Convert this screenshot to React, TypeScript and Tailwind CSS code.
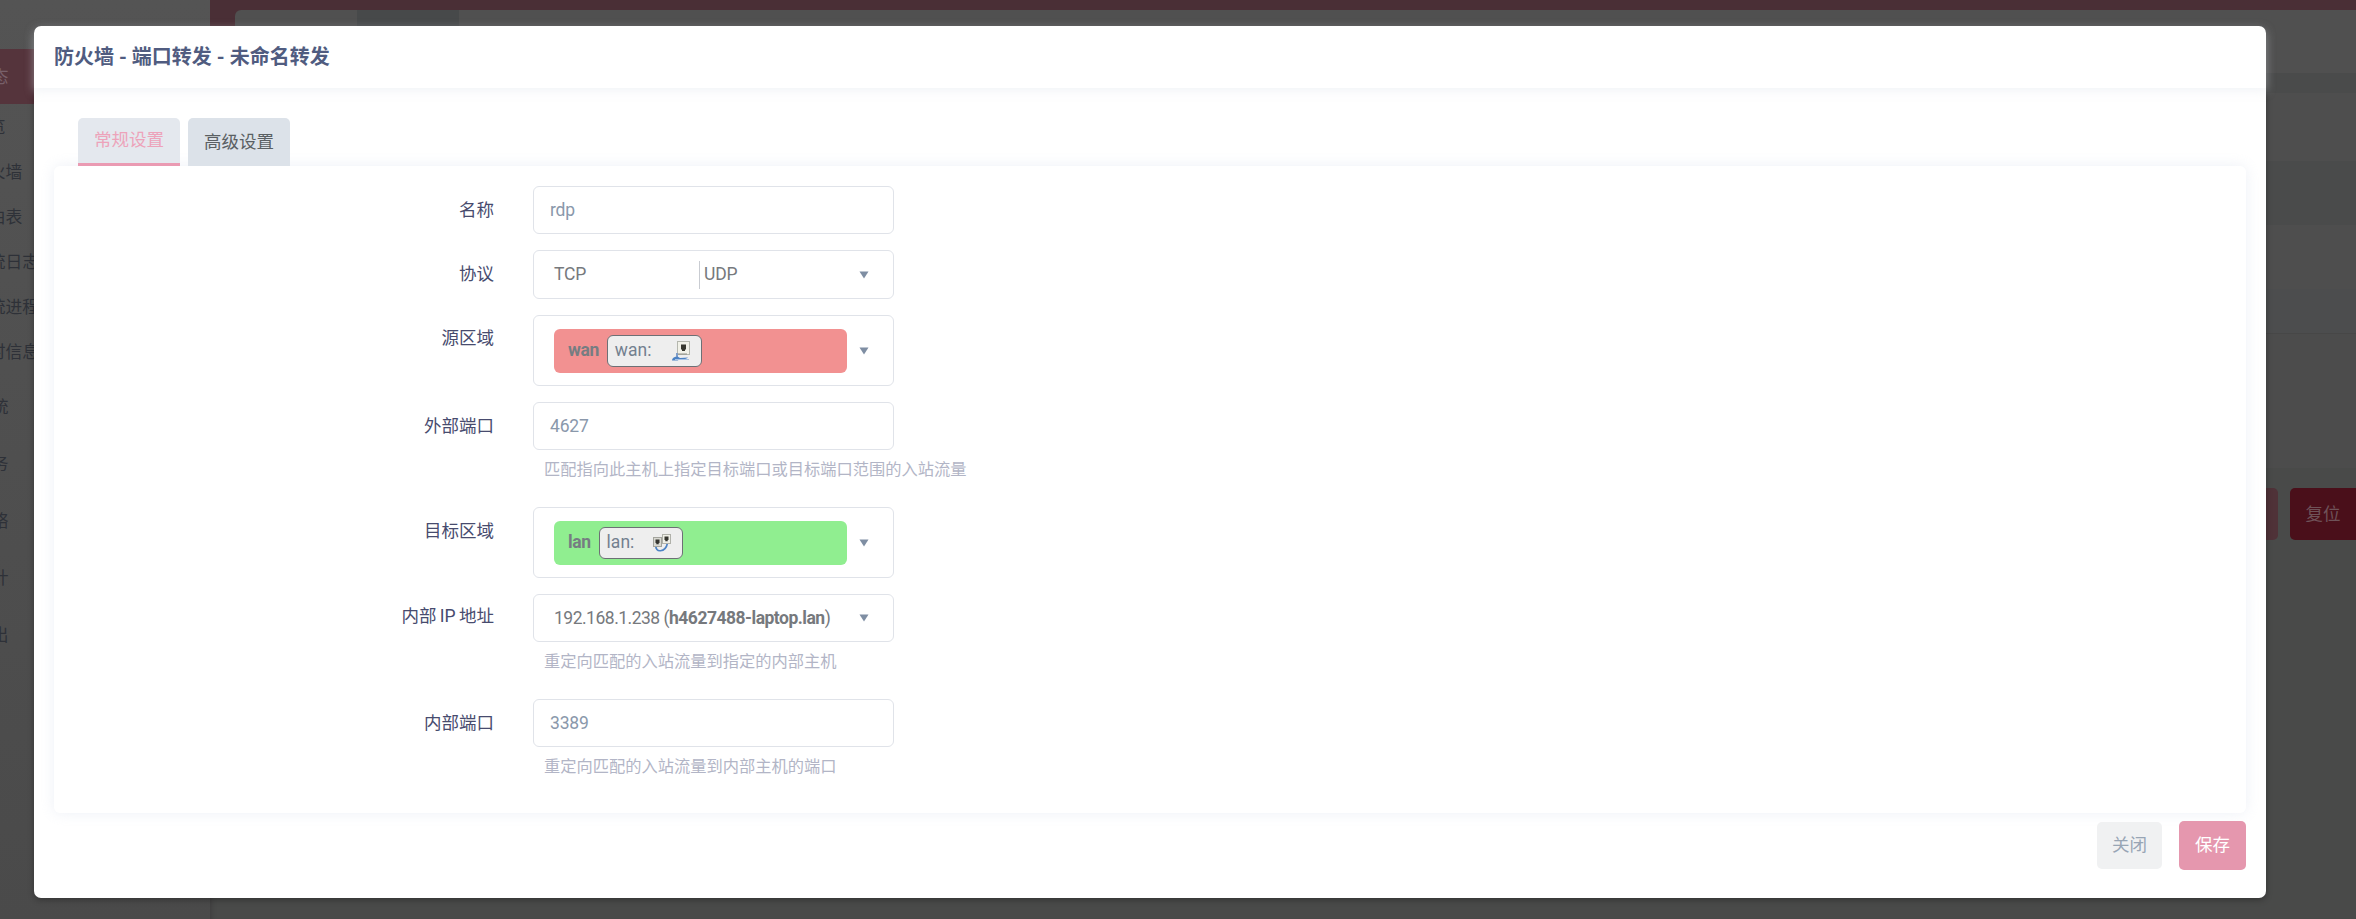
import React from "react";

const subItems = ["概览", "防火墙", "路由表", "系统日志", "系统进程", "实时信息"];
const topItems = ["系统", "服务", "网络", "统计", "退出"];

const Arrow = () => (
  <svg width="10" height="8" viewBox="0 0 10 8" className="shrink-0">
    <path d="M0.5 0.5h9L5 7.5z" fill="#7f8ea3" />
  </svg>
);

const WanIcon = () => (
  <svg width="20" height="22" viewBox="0 0 20 22" className="shrink-0">
    <rect x="6.5" y="1.5" width="12" height="13" fill="#f1f1e8" stroke="#b5b7ae" />
    <path d="M10 4.500h5v5h-1v1.500h-3V9.500h-1z" fill="#37372f" />
    <path d="M7 14h9" stroke="#8f9188" strokeWidth="1" />
    <path d="M6 13v4" stroke="#7f9dc8" strokeWidth="2" />
    <path d="M1 20.500c.5-3.500 3-3.500 5.500-4l2.500 1.500 8-.5c-2 2.500-8 1.500-10.500 3z" fill="#4c82c4" />
    <path d="M4 19.500h14" stroke="#a7c2e4" strokeWidth="1" />
  </svg>
);

const LanIcon = () => (
  <svg width="20" height="20" viewBox="0 0 20 20" className="shrink-0">
    <path d="M4 12c-1.500 8 9.500 8 11.500-2" fill="none" stroke="#4c82c4" strokeWidth="1.700" />
    <rect x="1.500" y="4.500" width="8" height="9" fill="#d9d9d2" stroke="#a3a49d" />
    <rect x="10.500" y="1.500" width="8" height="9" fill="#efefe7" stroke="#b0b1aa" />
    <path d="M3.500 6.500h4v3.500h-.8v1.200H4.300V10h-.8z" fill="#35352f" />
    <path d="M12.500 3.500h4V7h-.8v1.200h-2.400V7h-.8z" fill="#35352f" />
  </svg>
);

const Row = ({
  label,
  hint,
  labelTop = "",
  children,
}: {
  label: string;
  hint?: string;
  labelTop?: string;
  children: React.ReactNode;
}) => (
  <div className="flex mb-[16px]">
    <label className={`w-[440px] shrink-0 text-right text-[17.5px] leading-[24px] text-[#474b6e] ${labelTop}`}>
      {label}
    </label>
    <div className="ml-[39px] w-[361px]">
      {children}
      {hint && (
        <div className="h-[41px] pl-[11px] pt-[9px] text-[16.25px] leading-[22px] whitespace-nowrap text-[#b2b5c6]">
          {hint}
        </div>
      )}
    </div>
  </div>
);

const TextBox = ({ value }: { value: string }) => (
  <div className="h-[48px] flex items-center px-[16px] rounded-[6px] border border-[#e0e3e9] text-[17.5px] tracking-[-0.2px] text-[#8a98ab]">
    {value}
  </div>
);

const Zone = ({
  name,
  bg,
  chipWidth,
  children,
}: {
  name: string;
  bg: string;
  chipWidth: string;
  children: React.ReactNode;
}) => (
  <div className="h-[71px] flex items-center pl-[20px] pr-[24px] rounded-[6px] border border-[#e0e3e9] justify-between">
    <div className={`w-[293px] h-[44px] rounded-[6px] flex items-center pl-[14px] ${bg}`}>
      <span className="text-[17.5px] font-bold tracking-[-0.4px] text-[#767d82]">{name}</span>
      <div className={`ml-[8px] h-[32px] flex items-center justify-between pl-[7px] pr-[10px] rounded-[6px] border border-[#6d7075] bg-[#eeeeee] text-[17.5px] text-[#73808f] ${chipWidth}`}>
        <span>{name}:</span>
        {children}
      </div>
    </div>
    <Arrow />
  </div>
);

export default function App() {
  return (
    <div className="relative h-[919px] w-full overflow-hidden bg-[#4a4a4a] font-['Roboto','Noto_Sans_CJK_SC',sans-serif]">
      {/* page behind the dialog */}
      <div className="flex h-full">
        <aside className="w-[210px] shrink-0 overflow-hidden bg-gradient-to-b from-[#545454] to-[#4a4a4a] text-[16.8px] leading-[24px] text-[#2e3138] whitespace-nowrap">
          <div className="h-[49px]" />
          <div className="h-[55px] flex items-center bg-[#55343c] text-[#78606a]">
            <span className="-ml-[25px]">状态</span>
          </div>
          {subItems.map((item) => (
            <div key={item} className="h-[45px] flex items-center first:mt-[7px]">
              <span className="-ml-[28px]">{item}</span>
            </div>
          ))}
          <div className="mt-[4px]">
            {topItems.map((item) => (
              <div key={item} className="h-[57px] flex items-center">
                <span className="-ml-[25px]">{item}</span>
              </div>
            ))}
          </div>
        </aside>
        <main className="flex-1 flex flex-col bg-[#494a49] shadow-[inset_6px_0_6px_-6px_rgba(0,0,0,0.25)]">
          <div className="bg-[#4a2f36] pt-[10px] pl-[25px]">
            <div className="h-[16px] flex bg-[#505050] rounded-tl-[6px]">
              <div className="w-[122px]" />
              <div className="w-[102px] bg-[#47494a]" />
            </div>
          </div>
          <div className="ml-[25px]">
            <div className="h-[47px] bg-[#505050]" />
            <div className="h-[20px] bg-[#4a4b4b]" />
            <div className="h-[68px] bg-[#4e4e4e]" />
            <div className="h-[64px] bg-[#4a4b4b]" />
            <div className="h-[64px] bg-[#4e4e4e]" />
            <div className="h-[45px] bg-[#4c4d4e] border-b border-[#474747]" />
            <div className="h-[134px] bg-[#4c4c4c]" />
          </div>
          <div className="mt-[20px] flex justify-end gap-[12px]">
            <div className="w-[100px] h-[52px] rounded-[5px] bg-[#4f3238]" />
            <div className="w-[66px] h-[52px] rounded-l-[5px] bg-[#4a0f1a] flex items-center justify-center text-[17.5px] text-[#6f5258]">
              复位
            </div>
          </div>
        </main>
      </div>

      {/* dialog */}
      <div className="absolute left-[34px] top-[26px] w-[2232px] h-[872px] flex flex-col rounded-[7px] bg-white shadow-[0_2px_6px_rgba(0,0,0,0.3)]">
        <div className="h-[62px] shrink-0 flex items-center px-[20px] rounded-t-[7px] shadow-[0_3px_10px_rgba(230,233,240,0.5)] text-[20px] font-bold text-[#505c80]">
          防火墙 - 端口转发 - 未命名转发
        </div>
        <div className="flex-1 px-[20px] pt-[30px]">
          <div className="flex ml-[24px] gap-[8px] text-[17.5px]">
            <div className="w-[102px] h-[48px] flex items-center justify-center rounded-t-[5px] bg-[#e4e8ee] border-b-[3px] border-[#ea9ab2] text-[#eda3ba]">
              常规设置
            </div>
            <div className="w-[102px] h-[48px] flex items-center justify-center rounded-t-[5px] bg-[#dce2e9] text-[#5a5f63]">
              高级设置
            </div>
          </div>
          <div className="h-[647px] pt-[20px] rounded-[6px] bg-white shadow-[0_0_14px_rgba(225,230,240,0.6)]">
            <Row label="名称" labelTop="mt-[12px]">
              <TextBox value="rdp" />
            </Row>
            <Row label="协议" labelTop="mt-[12px]">
              <div className="h-[49px] flex items-center pl-[20px] pr-[24px] rounded-[6px] border border-[#e0e3e9] text-[17.5px] tracking-[-0.2px] text-[#76797d]">
                <span className="w-[145px]">TCP</span>
                <span className="h-[28px] border-l border-[#c9ccd2] pl-[4px] flex-1 leading-[26px]">UDP</span>
                <Arrow />
              </div>
            </Row>
            <Row label="源区域" labelTop="mt-[11px]">
              <Zone name="wan" bg="bg-[#f29191]" chipWidth="w-[95px]">
                <WanIcon />
              </Zone>
            </Row>
            <Row label="外部端口" hint="匹配指向此主机上指定目标端口或目标端口范围的入站流量" labelTop="mt-[12px]">
              <TextBox value="4627" />
            </Row>
            <Row label="目标区域" labelTop="mt-[12px]">
              <Zone name="lan" bg="bg-[#90ee90]" chipWidth="w-[84px]">
                <LanIcon />
              </Zone>
            </Row>
            <Row label="内部 IP 地址" hint="重定向匹配的入站流量到指定的内部主机" labelTop="mt-[10px] [word-spacing:-1px]">
              <div className="h-[48px] flex items-center justify-between pl-[20px] pr-[24px] rounded-[6px] border border-[#e0e3e9] text-[17.5px] tracking-[-0.5px] text-[#76797d] whitespace-nowrap">
                <span>
                  192.168.1.238 (<b className="text-[#76797d]">h4627488-laptop.lan</b>)
                </span>
                <Arrow />
              </div>
            </Row>
            <Row label="内部端口" hint="重定向匹配的入站流量到内部主机的端口" labelTop="mt-[12px]">
              <TextBox value="3389" />
            </Row>
          </div>
          <div className="mt-[8px] flex justify-end items-center gap-[17px] text-[17.5px]">
            <button className="w-[65px] h-[47px] rounded-[5px] bg-[#f0f1f2] text-[#98a5b5]">关闭</button>
            <button className="w-[67px] h-[49px] rounded-[5px] bg-[#e597ae] text-white">保存</button>
          </div>
        </div>
      </div>
    </div>
  );
}
